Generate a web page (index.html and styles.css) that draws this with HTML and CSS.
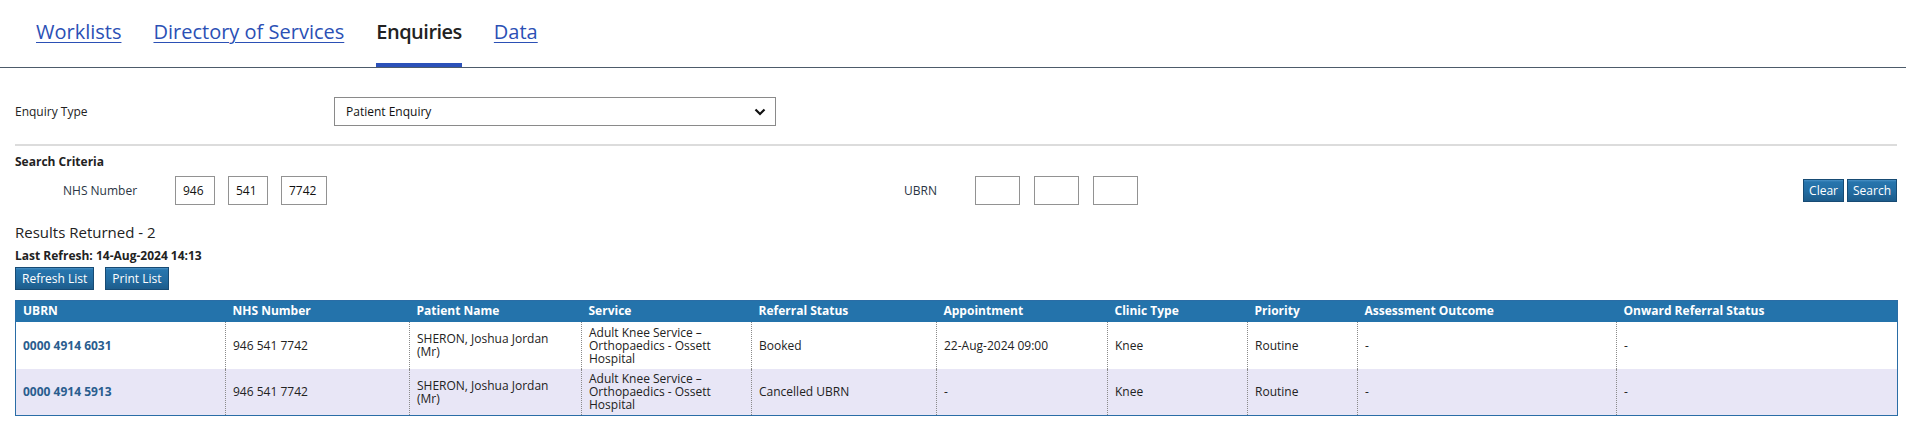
FILE: index.html
```html
<!DOCTYPE html>
<html lang="en">
<head>
<meta charset="utf-8">
<title>Enquiries</title>
<link rel="stylesheet" href="styles.css">
</head>
<body>
<nav class="tabs">
  <a class="tab" href="#">Worklists</a>
  <a class="tab" href="#">Directory of Services</a>
  <span class="tab tab-active">Enquiries</span>
  <a class="tab" href="#">Data</a>
</nav>
<main class="page">
  <div class="field-row">
    <label class="field-label">Enquiry Type</label>
    <div class="select-wrap">
      <select class="select"><option>Patient Enquiry</option></select>
      <svg class="chev" width="12" height="8" viewBox="0 0 12 8"><path d="M1.5 1.5 6 6l4.5-4.5" fill="none" stroke="#111" stroke-width="2.2"/></svg>
    </div>
  </div>
  <hr class="sep">
  <h3 class="section-title">Search Criteria</h3>
  <div class="criteria">
    <div class="crit-group crit-nhs">
      <span class="crit-label nhs-label">NHS Number</span>
      <input class="box box-s" value="946">
      <input class="box box-s" value="541">
      <input class="box box-m" value="7742">
    </div>
    <div class="crit-group crit-ubrn">
      <span class="crit-label ubrn-label">UBRN</span>
      <input class="box box-u" value="">
      <input class="box box-u" value="">
      <input class="box box-u" value="">
    </div>
    <div class="actions">
      <button class="btn">Clear</button>
      <button class="btn">Search</button>
    </div>
  </div>
  <p class="results">Results Returned - 2</p>
  <p class="refresh">Last Refresh: 14-Aug-2024 14:13</p>
  <div class="list-actions">
    <button class="btn">Refresh List</button>
    <button class="btn">Print List</button>
  </div>
  <table class="grid">
    <colgroup>
      <col class="c1"><col class="c2"><col class="c3"><col class="c4"><col class="c5">
      <col class="c6"><col class="c7"><col class="c8"><col class="c9"><col class="c10">
    </colgroup>
    <thead>
      <tr>
        <th>UBRN</th><th>NHS Number</th><th>Patient Name</th><th>Service</th><th>Referral Status</th>
        <th>Appointment</th><th>Clinic Type</th><th>Priority</th><th>Assessment Outcome</th><th>Onward Referral Status</th>
      </tr>
    </thead>
    <tbody>
      <tr>
        <td><a class="ubrn" href="#">0000 4914 6031</a></td>
        <td>946 541 7742</td>
        <td>SHERON, Joshua Jordan (Mr)</td>
        <td>Adult Knee Service – Orthopaedics - Ossett Hospital</td>
        <td>Booked</td>
        <td>22-Aug-2024 09:00</td>
        <td>Knee</td>
        <td>Routine</td>
        <td>-</td>
        <td>-</td>
      </tr>
      <tr class="alt">
        <td><a class="ubrn" href="#">0000 4914 5913</a></td>
        <td>946 541 7742</td>
        <td>SHERON, Joshua Jordan (Mr)</td>
        <td>Adult Knee Service – Orthopaedics - Ossett Hospital</td>
        <td>Cancelled UBRN</td>
        <td>-</td>
        <td>Knee</td>
        <td>Routine</td>
        <td>-</td>
        <td>-</td>
      </tr>
    </tbody>
  </table>
</main>
</body>
</html>
```
FILE: styles.css
```css
* { box-sizing: border-box; }
html, body { margin: 0; padding: 0; background: #fff; }
body {
  font-family: "Open Sans", "Noto Sans", "Liberation Sans", sans-serif;
  font-size: 12px;
  color: #222;
}

/* Tabs */
.tabs {
  display: flex;
  gap: 32px;
  padding-left: 36px;
  border-bottom: 1px solid #4d5b6a;
}
.tab {
  display: block;
  font-size: 20px;
  line-height: 28px;
  padding-top: 18px;
  padding-bottom: 17px;
  border-bottom: 4px solid transparent;
  color: #2b50b5;
  text-decoration: underline;
  text-underline-offset: 3px;
  text-decoration-thickness: 1px;
}
.tab-active {
  color: #222;
  font-weight: 600;
  letter-spacing: -0.5px;
  text-decoration: none;
  border-bottom-color: #2b51b9;
}

/* Page */
.page { padding: 0 9px 0 15px; }

.field-row {
  display: flex;
  align-items: center;
  margin-top: 29px;
}
.field-label { width: 319px; color: #222; }
.select-wrap { position: relative; width: 442px; height: 29px; }
.select {
  appearance: none;
  -webkit-appearance: none;
  width: 100%;
  height: 29px;
  border: 1px solid #8a8a8a;
  border-radius: 0;
  background: #fff;
  font: inherit;
  font-size: 12px;
  color: #111;
  padding: 0 11px;
}
.chev { position: absolute; right: 10px; top: 11px; pointer-events: none; }

.sep {
  margin: 18px 0 0;
  border: 0;
  height: 2px;
  background: #dcdcdc;
}

.section-title {
  margin: 8px 0 0;
  font-size: 12px;
  line-height: 16px;
  font-weight: 700;
  color: #222;
}

.criteria {
  display: flex;
  align-items: center;
  margin-top: 6px;
}
.crit-group { display: flex; align-items: center; flex: none; }
.crit-nhs { width: 889px; padding-left: 48px; gap: 13px; }
.crit-ubrn { gap: 14px; }
.crit-label { color: #2a3544; }
.nhs-label { width: 99px; }
.ubrn-label { width: 57px; }
.box {
  height: 29px;
  border: 1px solid #929292;
  border-radius: 0;
  background: #fff;
  font: inherit;
  font-size: 12px;
  color: #111;
  padding: 0 7px;
}
.box-s { width: 40px; }
.box-m { width: 46px; }
.box-u { width: 45px; }

.actions { margin-left: auto; display: flex; gap: 3px; }

.btn {
  height: 23px;
  border: 1px solid #174b74;
  border-radius: 0;
  background: linear-gradient(#4a92c6 0, #2775ad 2px, #236ca1 55%, #1d5c8b 100%);
  color: #fff;
  font-family: inherit;
  font-size: 12px;
  line-height: 20px;
  padding: 0 5px;
  cursor: pointer;
}

.results {
  margin: 17px 0 0;
  font-size: 15px;
  line-height: 20px;
  color: #222;
}
.refresh {
  margin: 6px 0 0;
  font-size: 12px;
  line-height: 16px;
  font-weight: 700;
  color: #222;
}
.list-actions { display: flex; gap: 11px; margin-top: 3px; }
.list-actions .btn { padding: 0 6px; }

/* Table */
.grid {
  margin-top: 10px;
  width: 1882px;
  table-layout: fixed;
  border-collapse: collapse;
  border: 1px solid #2a6da6;
}
.c1 { width: 210px; }
.c2 { width: 184px; }
.c3 { width: 172px; }
.c4 { width: 170px; }
.c5 { width: 185px; }
.c6 { width: 171px; }
.c7 { width: 140px; }
.c8 { width: 110px; }
.c9 { width: 259px; }
.c10 { width: 281px; }

.grid th {
  background: #2473ab;
  color: #fff;
  font-weight: 700;
  font-size: 12px;
  text-align: left;
  height: 21px;
  padding: 0 8px 0 7px;
  line-height: 16px;
}
.grid td {
  height: 47px;
  padding: 0 8px 0 7px;
  font-size: 12px;
  line-height: 13px;
  color: #222;
  vertical-align: middle;
  border-left: 1px dotted #8a8a8a;
}
.grid td:first-child { border-left: 0; }
.grid tr.alt td { background: #e8e6f6; }
.ubrn {
  color: #2a5d8e;
  font-weight: 700;
  text-decoration: none;
}
```
